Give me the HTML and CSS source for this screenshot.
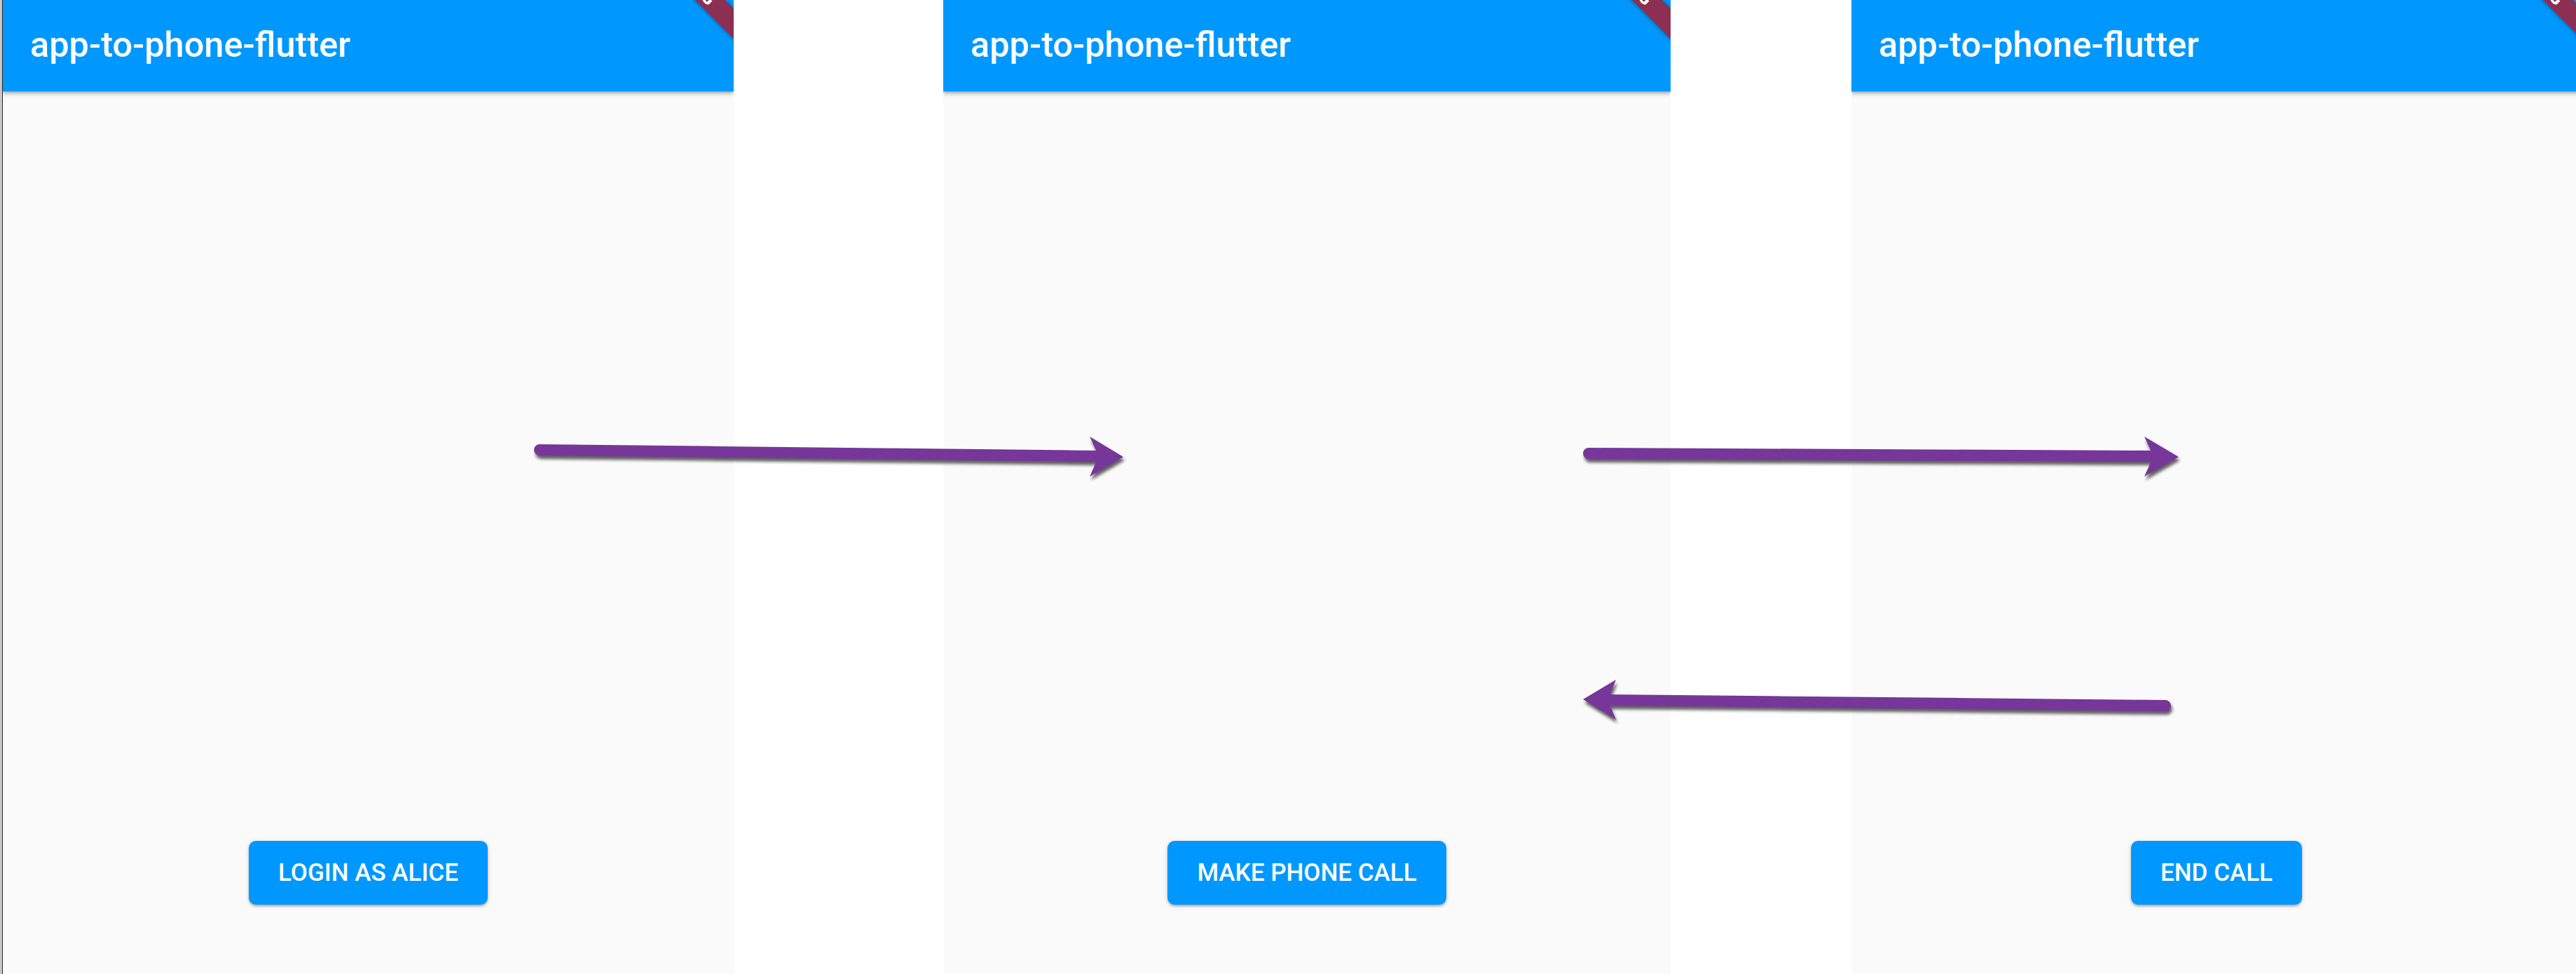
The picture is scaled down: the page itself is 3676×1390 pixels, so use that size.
FILE: index.html
```html
<!DOCTYPE html>
<html lang="en">
<head>
<meta charset="utf-8">
<title>app-to-phone-flutter</title>
<link rel="stylesheet" href="styles.css">
</head>
<body>
<div class="stage">
  <div class="edge"></div>

  <section class="screen screen-1">
    <header class="appbar"><h1 class="title">app-to-phone-flutter</h1></header>
    <div class="banner"><span>DEBUG</span></div>
    <main class="content">
      <button class="btn">LOGIN AS ALICE</button>
    </main>
  </section>

  <section class="screen screen-2">
    <header class="appbar"><h1 class="title">app-to-phone-flutter</h1></header>
    <div class="banner"><span>DEBUG</span></div>
    <main class="content">
      <button class="btn">MAKE PHONE CALL</button>
    </main>
  </section>

  <section class="screen screen-3">
    <header class="appbar"><h1 class="title">app-to-phone-flutter</h1></header>
    <div class="banner"><span>DEBUG</span></div>
    <main class="content">
      <button class="btn">END CALL</button>
    </main>
  </section>

  <svg class="arrows" width="3676" height="1390" viewBox="0 0 3676 1390" aria-hidden="true">
    <g class="arrow">
      <line x1="770" y1="642" x2="1568" y2="651"/>
      <polygon points="1603,652 1555,623 1568,651 1555,680"/>
    </g>
    <g class="arrow">
      <line x1="2267" y1="647" x2="3073" y2="651"/>
      <polygon points="3109,652 3060,623 3073,651 3060,680"/>
    </g>
    <g class="arrow">
      <line x1="2294" y1="999" x2="3090" y2="1007"/>
      <polygon points="2259,998 2306,970 2294,999 2306,1027"/>
    </g>
  </svg>
</div>
</body>
</html>
```

FILE: styles.css
```css
html, body {
  margin: 0;
  padding: 0;
  background: #ffffff;
  overflow: hidden;
}

.stage {
  position: relative;
  display: flex;
  width: 3676px;
  height: 1390px;
  overflow: hidden;
}

.edge {
  flex: 0 0 3px;
  height: 100%;
  background: #c9c9c9;
  border-right: 1px solid #262626;
}

.screen {
  position: relative;
  flex: 0 0 auto;
  display: flex;
  flex-direction: column;
  height: 1390px;
  background: #fafafa;
  overflow: hidden;
}

.screen-1 { width: 1043px; }
.screen-2 { width: 1038px; margin-left: 299px; }
.screen-3 { width: 1042px; margin-left: 258px; }

.appbar {
  position: relative;
  z-index: 2;
  flex: 0 0 131px;
  box-sizing: border-box;
  display: flex;
  align-items: center;
  padding-left: 39px;
  background: #0098fe;
  border-bottom: 1px solid #35b2ff;
  box-shadow: 0 4px 5px rgba(0, 0, 0, 0.12), 0 1px 10px rgba(0, 0, 0, 0.10), 0 2px 4px -1px rgba(0, 0, 0, 0.18);
}

.title {
  margin: 0;
  padding-bottom: 2px;
  font-family: Roboto, "Noto Sans", sans-serif;
  font-weight: 500;
  font-size: 50.5px;
  line-height: 1;
  color: #ffffff;
  letter-spacing: 0;
}

.banner {
  position: absolute;
  z-index: 3;
  top: -39px;
  right: -42px;
  width: 200px;
  height: 30px;
  display: flex;
  align-items: center;
  justify-content: center;
  background: #8c2f52;
  transform: rotate(45deg);
  box-shadow: 0 0 6px rgba(0, 0, 0, 0.45);
}

.banner span {
  font-family: Roboto, "Noto Sans", sans-serif;
  font-weight: 900;
  font-size: 24px;
  line-height: 1;
  color: #ffffff;
}

.content {
  flex: 1 1 auto;
  display: flex;
  flex-direction: column;
  align-items: center;
  justify-content: flex-end;
  padding-bottom: 99px;
}

.btn {
  box-sizing: border-box;
  height: 91px;
  padding: 0 42px;
  border: 0;
  border-radius: 10px;
  background: #0098fe;
  color: #ffffff;
  font-family: Roboto, "Noto Sans", sans-serif;
  font-weight: 500;
  font-size: 35px;
  letter-spacing: 0;
  white-space: nowrap;
  box-shadow: 0 3px 3px -1px rgba(0, 0, 0, 0.22), 0 2px 5px rgba(0, 0, 0, 0.14), 0 1px 9px rgba(0, 0, 0, 0.08);
}

.arrows {
  position: absolute;
  top: 0;
  left: 0;
  z-index: 5;
  pointer-events: none;
}

.arrow {
  filter: drop-shadow(2px 5px 2px rgba(0, 0, 0, 0.62));
}

.arrow line {
  stroke: #773699;
  stroke-width: 16;
  stroke-linecap: round;
}

.arrow polygon {
  fill: #773699;
}
```
